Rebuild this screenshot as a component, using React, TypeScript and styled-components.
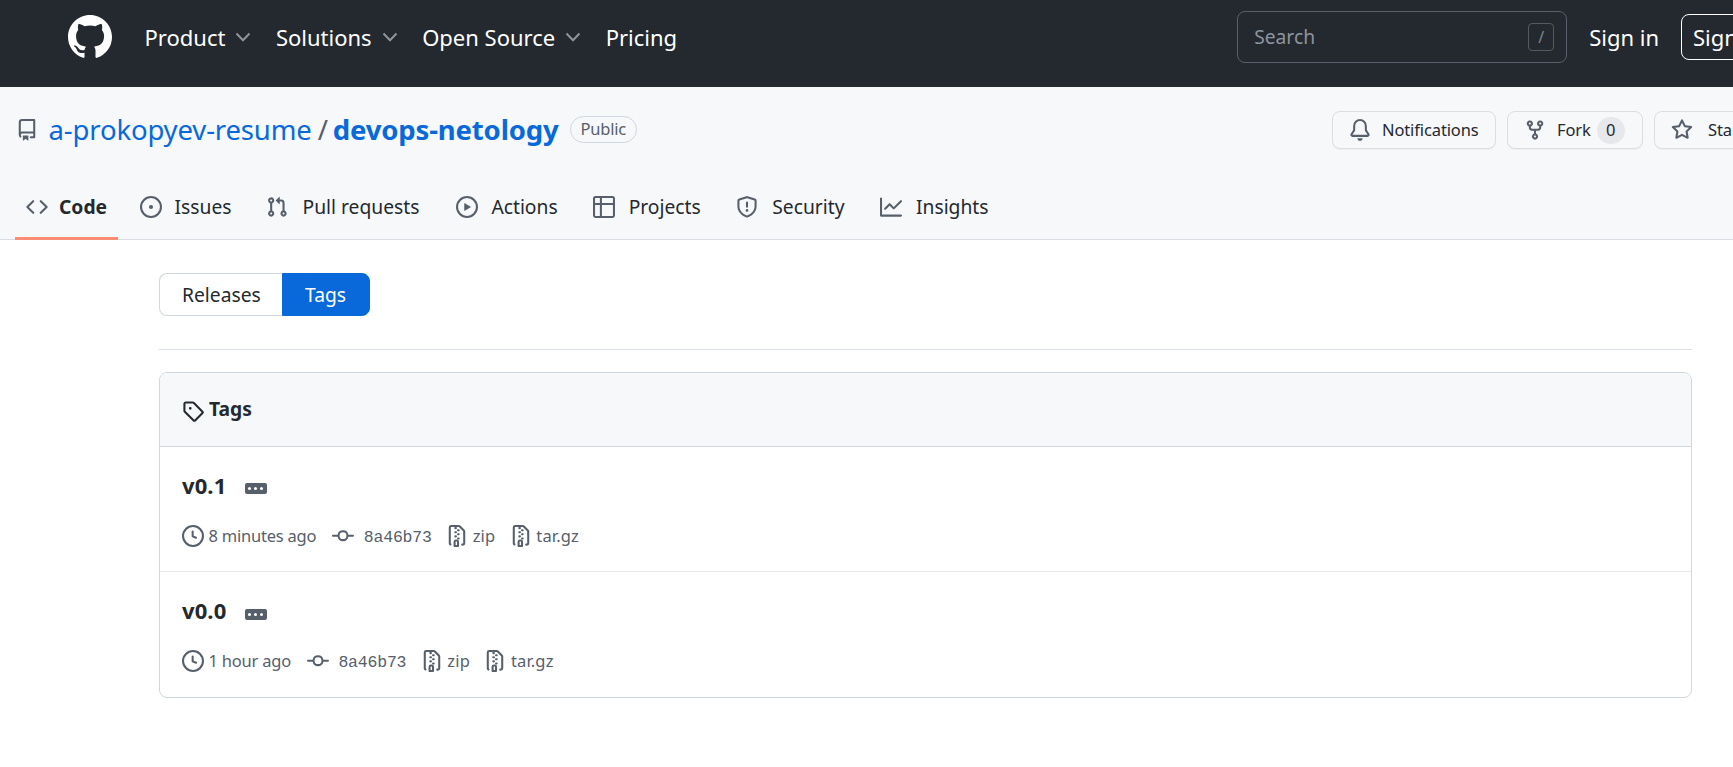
import React from "react";
import styled, { createGlobalStyle, css } from "styled-components";

const Global = createGlobalStyle`
  * { box-sizing: border-box; }
  html, body { margin: 0; overflow: hidden; }
  body {
    background: #fff;
    color: #24292f;
    font: 19.25px/28.875px "Noto Sans", sans-serif;
  }
  a { color: inherit; text-decoration: none; }
`;

const paths = {
  mark: "M8 0C3.58 0 0 3.58 0 8c0 3.54 2.29 6.53 5.47 7.59.4.07.55-.17.55-.38 0-.19-.01-.82-.01-1.49-2.01.37-2.53-.49-2.69-.94-.09-.23-.48-.94-.82-1.13-.28-.15-.68-.52-.01-.53.63-.01 1.08.58 1.23.82.72 1.21 1.87.87 2.33.66.07-.52.28-.87.51-1.07-1.78-.2-3.64-.89-3.64-3.95 0-.87.31-1.59.82-2.15-.08-.2-.36-1.02.08-2.12 0 0 .67-.21 2.2.82.64-.18 1.32-.27 2-.27.68 0 1.36.09 2 .27 1.53-1.04 2.2-.82 2.2-.82.44 1.1.16 1.92.08 2.12.51.56.82 1.27.82 2.15 0 3.07-1.87 3.75-3.65 3.95.29.25.54.73.54 1.48 0 1.07-.01 1.93-.01 2.2 0 .21.15.46.55.38A8.013 8.013 0 0016 8c0-4.42-3.58-8-8-8z",
  repo: "M2 2.5A2.5 2.5 0 014.5 0h8.75a.75.75 0 01.75.75v12.5a.75.75 0 01-.75.75h-2.5a.75.75 0 110-1.5h1.75v-2h-8a1 1 0 00-.714 1.7.75.75 0 01-1.072 1.05A2.495 2.495 0 012 11.5v-9zm10.5-1V9h-8c-.356 0-.694.074-1 .208V2.5a1 1 0 011-1h8zM5 12.25v3.25a.25.25 0 00.4.2l1.45-1.087a.25.25 0 01.3 0L8.6 15.7a.25.25 0 00.4-.2v-3.25a.25.25 0 00-.25-.25h-3.5a.25.25 0 00-.25.25z",
  code: "M4.72 3.22a.75.75 0 011.06 1.06L2.06 8l3.72 3.72a.75.75 0 11-1.06 1.06L.47 8.53a.75.75 0 010-1.06l4.25-4.25zm6.56 0a.75.75 0 10-1.06 1.06L13.94 8l-3.72 3.72a.75.75 0 101.06 1.06l4.25-4.25a.75.75 0 000-1.06l-4.25-4.25z",
  issue: "M8 9.5a1.5 1.5 0 100-3 1.5 1.5 0 000 3zM8 0a8 8 0 100 16A8 8 0 008 0zM1.5 8a6.5 6.5 0 1113 0 6.5 6.5 0 01-13 0z",
  pull: "M7.177 3.073L9.573.677A.25.25 0 0110 .854v4.792a.25.25 0 01-.427.177L7.177 3.427a.25.25 0 010-.354zM3.75 2.5a.75.75 0 100 1.5.75.75 0 000-1.5zm-2.25.75a2.25 2.25 0 113 2.122v5.256a2.251 2.251 0 11-1.5 0V5.372A2.25 2.25 0 011.5 3.25zM11 2.5h-1V4h1a1 1 0 011 1v5.628a2.251 2.251 0 101.5 0V5A2.5 2.5 0 0011 2.5zm1 10.25a.75.75 0 111.5 0 .75.75 0 01-1.5 0zM3.75 12a.75.75 0 100 1.5.75.75 0 000-1.5z",
  play: "M1.5 8a6.5 6.5 0 1113 0 6.5 6.5 0 01-13 0zM8 0a8 8 0 100 16A8 8 0 008 0zM6.379 5.227A.25.25 0 006 5.442v5.117a.25.25 0 00.379.214l4.264-2.559a.25.25 0 000-.428L6.379 5.227z",
  table: "M0 1.75C0 .784.784 0 1.75 0h12.5C15.216 0 16 .784 16 1.75v12.5A1.75 1.75 0 0114.25 16H1.75A1.75 1.75 0 010 14.25V1.75zM1.5 6.5v7.75c0 .138.112.25.25.25H5v-8H1.5zM5 5H1.5V1.75a.25.25 0 01.25-.25H5V5zm1.5 1.5v8h7.75a.25.25 0 00.25-.25V6.5h-8zm8-1.5h-8V1.5h7.75a.25.25 0 01.25.25V5z",
  shield: "M7.467.133a1.75 1.75 0 011.066 0l5.25 1.68A1.75 1.75 0 0115 3.48V7c0 1.566-.32 3.182-1.303 4.682-.983 1.498-2.585 2.813-5.032 3.855a1.7 1.7 0 01-1.33 0c-2.447-1.042-4.049-2.357-5.032-3.855C1.32 10.182 1 8.566 1 7V3.48a1.75 1.75 0 011.217-1.667l5.25-1.68zm.61 1.429a.25.25 0 00-.153 0l-5.25 1.68a.25.25 0 00-.174.238V7c0 1.358.275 2.666 1.057 3.86.784 1.194 2.121 2.34 4.366 3.297a.2.2 0 00.154 0c2.245-.956 3.582-2.104 4.366-3.298C13.225 9.666 13.5 8.36 13.5 7V3.48a.25.25 0 00-.174-.237l-5.25-1.68zM9 10.5a1 1 0 11-2 0 1 1 0 012 0zm-.25-5.75a.75.75 0 10-1.5 0v3a.75.75 0 001.5 0v-3z",
  graph: "M1.5 1.75a.75.75 0 00-1.5 0v12.5c0 .414.336.75.75.75h14.5a.75.75 0 000-1.5H1.5V1.75zm14.28 2.53a.75.75 0 00-1.06-1.06L10 7.94 7.53 5.47a.75.75 0 00-1.06 0L3.22 8.72a.75.75 0 001.06 1.06L7 7.06l2.47 2.47a.75.75 0 001.06 0l5.25-5.25z",
  bell: "M8 16a2 2 0 001.985-1.75c.017-.137-.097-.25-.235-.25h-3.5c-.138 0-.252.113-.235.25A2 2 0 008 16zM3 5a5 5 0 0110 0v2.947c0 .05.015.098.042.139l1.703 2.555A1.518 1.518 0 0113.482 13H2.518a1.518 1.518 0 01-1.263-2.36l1.703-2.554A.25.25 0 003 7.947V5zm5-3.5A3.5 3.5 0 004.5 5v2.947c0 .346-.102.683-.294.97l-1.703 2.556a.018.018 0 00-.003.01l.001.006c0 .002.002.004.004.006a.017.017 0 00.006.004l.007.001h10.964l.007-.001a.016.016 0 00.006-.004.016.016 0 00.004-.006l.001-.007a.017.017 0 00-.003-.01l-1.703-2.554a1.75 1.75 0 01-.294-.97V5A3.5 3.5 0 008 1.5z",
  fork: "M5 3.25a.75.75 0 11-1.5 0 .75.75 0 011.5 0zm0 2.122a2.25 2.25 0 10-1.5 0v.878A2.25 2.25 0 005.75 8.5h1.5v2.128a2.251 2.251 0 101.5 0V8.5h1.5a2.25 2.25 0 002.25-2.25v-.878a2.25 2.25 0 10-1.5 0v.878a.75.75 0 01-.75.75h-4.5A.75.75 0 015 6.25v-.878zm3.75 7.378a.75.75 0 11-1.5 0 .75.75 0 011.5 0zm3-8.75a.75.75 0 100-1.5.75.75 0 000 1.5z",
  star: "M8 .25a.75.75 0 01.673.418l1.882 3.815 4.21.612a.75.75 0 01.416 1.279l-3.046 2.97.719 4.192a.75.75 0 01-1.088.791L8 12.347l-3.766 1.98a.75.75 0 01-1.088-.79l.72-4.194L.818 6.374a.75.75 0 01.416-1.28l4.21-.611L7.327.668A.75.75 0 018 .25zm0 2.445L6.615 5.5a.75.75 0 01-.564.41l-3.097.45 2.24 2.184a.75.75 0 01.216.664l-.528 3.084 2.769-1.456a.75.75 0 01.698 0l2.77 1.456-.53-3.084a.75.75 0 01.216-.664l2.24-2.183-3.096-.45a.75.75 0 01-.564-.41L8 2.694v.001z",
  tag: "M2.5 7.775V2.75a.25.25 0 01.25-.25h5.025a.25.25 0 01.177.073l6.25 6.25a.25.25 0 010 .354l-5.025 5.025a.25.25 0 01-.354 0l-6.25-6.25a.25.25 0 01-.073-.177zm-1.5 0V2.75C1 1.784 1.784 1 2.75 1h5.025c.464 0 .91.184 1.238.513l6.25 6.25a1.75 1.75 0 010 2.474l-5.026 5.026a1.75 1.75 0 01-2.474 0l-6.25-6.25A1.75 1.75 0 011 7.775zM6 5a1 1 0 100 2 1 1 0 000-2z",
  clock: "M1.5 8a6.5 6.5 0 1113 0 6.5 6.5 0 01-13 0zM8 0a8 8 0 100 16A8 8 0 008 0zm.5 4.75a.75.75 0 00-1.5 0v3.5a.75.75 0 00.471.696l2.5 1a.75.75 0 00.557-1.392L8.5 7.742V4.75z",
  commit: "M10.5 7.75a2.5 2.5 0 11-5 0 2.5 2.5 0 015 0zm1.43.75a4.002 4.002 0 01-7.86 0H.75a.75.75 0 110-1.5h3.32a4.001 4.001 0 017.86 0h3.32a.75.75 0 110 1.5h-3.32z",
  zip: "M3.5 1.75a.25.25 0 01.25-.25h3a.75.75 0 000 1.5h.5a.75.75 0 000-1.5h2.086a.25.25 0 01.177.073l2.914 2.914a.25.25 0 01.073.177v8.586a.25.25 0 01-.25.25h-.5a.75.75 0 000 1.5h.5A1.75 1.75 0 0014 13.25V4.664c0-.464-.184-.909-.513-1.237L10.573.513A1.75 1.75 0 009.336 0H3.75A1.75 1.75 0 002 1.75v11.5c0 .649.353 1.214.874 1.515a.75.75 0 10.752-1.298.25.25 0 01-.126-.217V1.75zM8.75 3a.75.75 0 000 1.5h.5a.75.75 0 000-1.5h-.5zM6 5.25a.75.75 0 01.75-.75h.5a.75.75 0 010 1.5h-.5A.75.75 0 016 5.25zm2 1.5A.75.75 0 018.75 6h.5a.75.75 0 010 1.5h-.5A.75.75 0 018 6.75zm-1.25.75a.75.75 0 000 1.5h.5a.75.75 0 000-1.5h-.5zM8 9.75A.75.75 0 018.75 9h.5a.75.75 0 010 1.5h-.5A.75.75 0 018 9.75zm-.75.75a1.75 1.75 0 00-1.75 1.75v3c0 .414.336.75.75.75h2.5a.75.75 0 00.75-.75v-3a1.75 1.75 0 00-1.75-1.75h-.5zM7 12.25a.25.25 0 01.25-.25h.5a.25.25 0 01.25.25v2.25H7v-2.25z",
};

type IconName = keyof typeof paths;

const Svg = styled.svg`
  display: block;
  flex: none;
  fill: currentColor;
`;

const Icon = ({ name, size = 22 }: { name: IconName; size?: number }) => (
  <Svg width={size} height={size} viewBox="0 0 16 16" aria-hidden>
    <path fillRule="evenodd" d={paths[name]} />
  </Svg>
);

const TopBar = styled.header`
  display: flex;
  align-items: center;
  height: 87px;
  padding: 0 0 13px 68px;
  background: #24292f;
  color: #fff;
  font-size: 22px;
  line-height: 33px;
  white-space: nowrap;
`;

const Logo = styled.a`
  margin: -1px 32.5px 0 0;
`;

const MainNav = styled.nav`
  display: flex;
  flex: 1;
`;

const NavItem = styled.a`
  display: flex;
  align-items: center;
  gap: 10px;
  margin-right: 24.5px;
`;

const Chevron = styled.svg`
  display: block;
  fill: none;
  stroke: #919497;
  stroke-width: 2;
`;

const SearchBox = styled.div`
  display: flex;
  flex: none;
  align-items: center;
  justify-content: space-between;
  width: 330px;
  height: 52px;
  margin-right: 22px;
  padding: 0 12px 2px 16px;
  border: 1px solid #57606a;
  border-radius: 8px;
  color: #8c959f;
  font-size: 19.25px;
`;

const SlashKey = styled.span`
  width: 26px;
  height: 28px;
  margin-top: 2px;
  border: 1px solid #555a5f;
  border-radius: 4px;
  color: #80858a;
  font-size: 16px;
  line-height: 27px;
  text-align: center;
`;

const SignUp = styled.a`
  flex: none;
  width: 106px;
  height: 46px;
  margin: 0 -54px 0 22px;
  padding-left: 11px;
  border: 1px solid #fff;
  border-radius: 8px;
  line-height: 44px;
`;

const RepoHead = styled.section`
  height: 153px;
  background: #f6f8fa;
  border-bottom: 1px solid #d8dee4;
`;

const TitleRow = styled.div`
  display: flex;
  align-items: center;
  height: 87px;
  padding: 0 0 1px 15.5px;
  white-space: nowrap;
`;

const RepoTitle = styled.h1`
  display: flex;
  flex: 1;
  align-items: center;
  margin: 0;
  color: #57606a;
  font-size: 27.5px;
  font-weight: 400;
  line-height: 42px;
  letter-spacing: -0.15px;
`;

const Owner = styled.a`
  margin-left: 11px;
  color: #0969da;
`;

const Slash = styled.span`
  margin: 0 5px 0 6px;
`;

const RepoName = styled.a`
  color: #0969da;
  font-weight: 700;
`;

const Visibility = styled.span`
  height: 27px;
  margin: -1px 0 0 11px;
  padding: 0 10px;
  border: 1px solid #d0d7de;
  border-radius: 14px;
  font-size: 16.5px;
  line-height: 24px;
  letter-spacing: -0.2px;
`;

const Actions = styled.div`
  display: flex;
  flex: none;
  gap: 11px;
  margin-right: -90px;
`;

const ActionButton = styled.button<{ $width: number; $gap?: number }>`
  display: flex;
  flex: none;
  align-items: center;
  gap: ${(p) => p.$gap ?? 11}px;
  width: ${(p) => p.$width}px;
  height: 38px;
  padding: 0 0 0 16px;
  border: 1px solid #dcdfe1;
  border-radius: 8px;
  background: #f6f8fa;
  box-shadow: 0 1px 0 rgba(27, 31, 36, 0.04);
  color: #24292f;
  font: 400 16.5px/27px "Noto Sans", sans-serif;
  letter-spacing: -0.12px;

  svg { color: #57606a; }
`;

const ActionLabel = styled.span`
  padding-bottom: 2px;
`;

const Count = styled.span`
  min-width: 28px;
  height: 27px;
  margin-left: -5px;
  border-radius: 14px;
  background: #e6e8eb;
  line-height: 26px;
  text-align: center;
`;

const Tabs = styled.nav`
  display: flex;
  gap: 11px;
  height: 65px;
  padding-left: 15px;
`;

const Tab = styled.a<{ $active?: boolean; $gap?: number; $after?: number }>`
  display: flex;
  align-items: center;
  gap: ${(p) => p.$gap ?? 13.5}px;
  height: 66px;
  margin-right: ${(p) => p.$after ?? 2.5}px;
  padding: 3px 11px 0;
  border-bottom: 3px solid transparent;
  white-space: nowrap;

  svg { color: #57606a; }

  ${(p) => p.$active && css`
    border-bottom-color: #fd8c73;
    font-weight: 700;
  `}
`;

const Content = styled.main`
  width: 1533px;
  margin: 33px 0 0 159px;
`;

const Switch = styled.nav`
  display: flex;
  height: 43px;
`;

const SwitchItem = styled.a<{ $active?: boolean }>`
  width: 123px;
  padding-left: 22px;
  border: 1px solid #d0d7de;
  border-right: 0;
  border-radius: 8px 0 0 8px;
  line-height: 42px;

  ${(p) => p.$active && css`
    width: 88px;
    border: 1px solid #0969da;
    border-radius: 0 8px 8px 0;
    background: #0969da;
    color: #fff;
  `}
`;

const Divider = styled.hr`
  height: 1px;
  margin: 33px 0 22px;
  border: 0;
  background: #d8dee4;
`;

const Box = styled.section`
  border: 1px solid #d0d7de;
  border-radius: 8px;
  overflow: hidden;
`;

const BoxHeader = styled.h2`
  display: flex;
  align-items: center;
  gap: 5px;
  height: 74px;
  margin: 0;
  padding-left: 22px;
  border-bottom: 1px solid #d0d7de;
  background: #f6f8fa;
  font-size: 19.25px;
  font-weight: 700;

  svg { margin-top: 2px; }
`;

const Ellipsis = styled.span`
  display: flex;
  align-items: center;
  justify-content: center;
  gap: 3px;
  width: 22px;
  height: 11px;
  margin-top: 6px;
  border-radius: 2px;
  background: #57606a;
`;

const Release = styled.article`
  height: 124px;
  padding: 22px 22px 0;

  & + & {
    height: 126px;
    border-top: 1px solid #e6eaee;
  }

  & + & ${Ellipsis} {
    margin-top: 8px;
  }
`;

const ReleaseName = styled.h3`
  display: flex;
  align-items: center;
  gap: 18.5px;
  height: 34px;
  margin: 0;
  padding-bottom: 2px;
  font-size: 22px;
  font-weight: 700;
  letter-spacing: 0.1px;
`;

const Dot = styled.i`
  width: 3px;
  height: 3px;
  border-radius: 50%;
  background: #fff;
`;

const Meta = styled.ul`
  display: flex;
  align-items: center;
  gap: 14.5px;
  height: 28px;
  margin: 19px 0 0;
  padding: 0;
  color: #57606a;
  font-size: 16.5px;
  list-style: none;
`;

const MetaItem = styled.li<{ $gap?: number }>`
  display: flex;
  align-items: center;
  gap: ${(p) => p.$gap ?? 4.5}px;
`;

const Age = styled.span`
  margin-right: 1.5px;
  letter-spacing: -0.22px;
`;

const Sha = styled.code`
  padding-top: 2px;
  font: 16.5px "Liberation Mono", monospace;
  letter-spacing: -0.2px;
`;

const Archive = styled.a`
  letter-spacing: 0.15px;
`;

const menus = ["Product", "Solutions", "Open Source"];

const tabs: { icon: IconName; label: string; gap?: number; after?: number }[] = [
  { icon: "code", label: "Code", gap: 11, after: 0 },
  { icon: "issue", label: "Issues", gap: 12.5, after: 1 },
  { icon: "pull", label: "Pull requests", gap: 15, after: 3.5 },
  { icon: "play", label: "Actions" },
  { icon: "table", label: "Projects", after: 2.5 },
  { icon: "shield", label: "Security", gap: 14, after: 3 },
  { icon: "graph", label: "Insights" },
];

const releases = [
  { name: "v0.1", age: "8 minutes ago", sha: "8a46b73" },
  { name: "v0.0", age: "1 hour ago", sha: "8a46b73" },
];

export default function App() {
  return (
    <>
      <Global />
      <TopBar>
        <Logo href="#"><Icon name="mark" size={44} /></Logo>
        <MainNav>
          {menus.map((m) => (
            <NavItem key={m} href="#">
              {m}
              <Chevron width="16" height="10" viewBox="0 0 16 10">
                <path d="M1.5 1.5L8 8.2l6.5-6.7" />
              </Chevron>
            </NavItem>
          ))}
          <NavItem href="#">Pricing</NavItem>
        </MainNav>
        <SearchBox>
          Search
          <SlashKey>/</SlashKey>
        </SearchBox>
        <a href="#">Sign in</a>
        <SignUp href="#">Sign up</SignUp>
      </TopBar>

      <RepoHead>
        <TitleRow>
          <RepoTitle>
            <Icon name="repo" />
            <Owner href="#">a-prokopyev-resume</Owner>
            <Slash>/</Slash>
            <RepoName href="#">devops-netology</RepoName>
            <Visibility>Public</Visibility>
          </RepoTitle>
          <Actions>
            <ActionButton $width={164}>
              <Icon name="bell" />
              <ActionLabel>Notifications</ActionLabel>
            </ActionButton>
            <ActionButton $width={136}>
              <Icon name="fork" />
              <ActionLabel>Fork</ActionLabel>
              <Count>0</Count>
            </ActionButton>
            <ActionButton $width={169} $gap={15}>
              <Icon name="star" />
              <ActionLabel>Star</ActionLabel>
            </ActionButton>
          </Actions>
        </TitleRow>
        <Tabs>
          {tabs.map((t, i) => (
            <Tab key={t.label} href="#" $active={i === 0} $gap={t.gap} $after={t.after}>
              <Icon name={t.icon} />
              {t.label}
            </Tab>
          ))}
        </Tabs>
      </RepoHead>

      <Content>
        <Switch>
          <SwitchItem href="#">Releases</SwitchItem>
          <SwitchItem href="#" $active>Tags</SwitchItem>
        </Switch>
        <Divider />
        <Box>
          <BoxHeader><Icon name="tag" />Tags</BoxHeader>
          {releases.map((r) => (
            <Release key={r.name}>
              <ReleaseName>
                {r.name}
                <Ellipsis><Dot /><Dot /><Dot /></Ellipsis>
              </ReleaseName>
              <Meta>
                <MetaItem><Icon name="clock" /><Age>{r.age}</Age></MetaItem>
                <MetaItem $gap={9.5}><Icon name="commit" /><Sha>{r.sha}</Sha></MetaItem>
                <MetaItem><Icon name="zip" /><Archive href="#">zip</Archive></MetaItem>
                <MetaItem><Icon name="zip" /><Archive href="#">tar.gz</Archive></MetaItem>
              </Meta>
            </Release>
          ))}
        </Box>
      </Content>
    </>
  );
}
